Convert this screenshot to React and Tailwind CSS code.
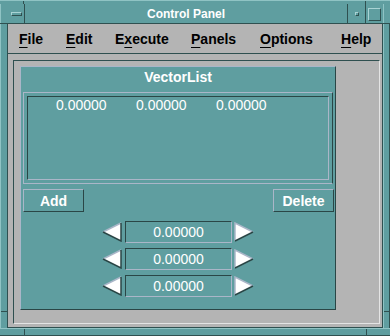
import React from "react";

const font = { fontFamily: '"Liberation Sans", Arial, sans-serif' };

function LeftArrow() {
  return (
    <svg width="20" height="20" viewBox="0 0 20 20" className="block">
      <polygon points="1,10 19,1 19,19" fill="#ffffff" />
      <polyline points="1,10 19,1" fill="none" stroke="#aab6c8" strokeWidth="1.5" />
      <polyline points="19,1 19,19 1,10" fill="none" stroke="#2a4646" strokeWidth="1.5" />
    </svg>
  );
}

function RightArrow() {
  return (
    <svg width="20" height="20" viewBox="0 0 20 20" className="block">
      <polygon points="1,1 19,10 1,19" fill="#ffffff" />
      <polyline points="1,19 1,1 19,10" fill="none" stroke="#aab6c8" strokeWidth="1.5" />
      <polyline points="19,10 1,19" fill="none" stroke="#2a4646" strokeWidth="1.5" />
    </svg>
  );
}

function MenuItem({ width, mnemonic, rest, before = "" }) {
  return (
    <div className={width}>
      {before}
      <span className="underline decoration-1 underline-offset-[3px]">{mnemonic}</span>
      {rest}
    </div>
  );
}

function Spinner() {
  return (
    <div className="flex h-[22px] items-center justify-center">
      <div className="mr-[3px]">
        <LeftArrow />
      </div>
      <div className="flex h-[22px] w-[107px] items-center justify-center border border-t-[#2a4646] border-l-[#2a4646] border-b-[#aab6c8] border-r-[#aab6c8] text-[14px] leading-[16px] text-white">
        0.00000
      </div>
      <div className="ml-[2px]">
        <RightArrow />
      </div>
    </div>
  );
}

export default function App() {
  return (
    <div className="flex h-[336px] w-[390px] flex-col bg-[#5f9ea0]" style={font}>
      {/* top frame strip */}
      <div className="flex h-[4px] border-t border-[#8fc3c4]">
        <div className="w-[24px] border-r border-[#2f5050]" />
        <div className="flex-1" />
        <div className="w-[25px] border-l border-[#2f5050]" />
      </div>

      {/* title bar */}
      <div className="flex h-[20px] border-b border-[#2f5050]">
        <div className="w-[8px] border-l border-[#8fc3c4]" />
        <div className="flex w-[17px] items-center justify-center border-r border-[#2f5050]">
          <div className="h-[4px] w-[11px] border border-t-[#a9d3d4] border-l-[#a9d3d4] border-b-[#2f5050] border-r-[#2f5050]" />
        </div>
        <div className="flex flex-1 items-center justify-center pt-[1px] text-[12px] font-bold leading-[14px] text-white">
          Control Panel
        </div>
        <div className="flex w-[18px] items-center justify-center border-l border-[#2f5050]">
          <div className="h-[4px] w-[4px] border border-t-[#a9d3d4] border-l-[#a9d3d4] border-b-[#2f5050] border-r-[#2f5050]" />
        </div>
        <div className="flex w-[18px] items-center justify-center border-l border-[#2f5050]">
          <div className="mt-[2px] h-[13px] w-[13px] border border-t-[#a9d3d4] border-l-[#a9d3d4] border-b-[#2f5050] border-r-[#2f5050]" />
        </div>
        <div className="w-[7px] border-l border-[#8fc3c4]" />
      </div>

      {/* middle */}
      <div className="flex flex-1">
        <div className="flex w-[8px] flex-col border-l border-[#8fc3c4]">
          <div className="flex-1 border-r border-[#2f5050]" />
          <div className="h-[17px] border-t border-r border-[#2f5050]" />
        </div>

        <div className="flex w-[375px] flex-col border-r border-[#2f5050] bg-[#b4b4b4]">
          {/* menu bar */}
          <div className="flex h-[30px] items-center border-b border-[#2f5050] pl-[11px] text-[14px] font-bold leading-[16px] text-black">
            <MenuItem width="w-[47px]" mnemonic="F" rest="ile" />
            <MenuItem width="w-[49px]" mnemonic="E" rest="dit" />
            <MenuItem width="w-[76px]" before="E" mnemonic="x" rest="ecute" />
            <MenuItem width="w-[69px]" mnemonic="P" rest="anels" />
            <MenuItem width="w-[81px]" mnemonic="O" rest="ptions" />
            <MenuItem width="w-[40px]" mnemonic="H" rest="elp" />
          </div>

          {/* work area */}
          <div className="flex-1 border-b border-[#2f5050] pl-[5px] pt-[6px] pr-[2px] pb-[3px]">
            <div className="h-full border border-t-[#2f5050] border-l-[#2f5050] border-b-[#e4e4e4] border-r-[#e4e4e4] pl-[6px] pt-[5px]">
              {/* teal panel */}
              <div className="flex h-[244px] w-[316px] flex-col border border-t-[#aab6c8] border-l-[#aab6c8] border-b-[#2a4646] border-r-[#2a4646] bg-[#5f9ea0] text-white">
                <div className="h-[25px] pt-[2px] text-center text-[14px] font-bold leading-[16px]">
                  VectorList
                </div>

                <div className="mx-[2px] h-[92px] border border-t-[#aab6c8] border-l-[#aab6c8] border-b-[#aab6c8] border-r-[#2a4646] p-[3px]">
                  <div className="h-full border border-t-[#2a4646] border-l-[#2a4646] border-b-[#aab6c8] border-r-[#aab6c8]">
                    <div className="flex pl-[28px] text-[14px] leading-[16px]">
                      <span className="w-[80px]">0.00000</span>
                      <span className="w-[80px]">0.00000</span>
                      <span className="w-[80px]">0.00000</span>
                    </div>
                  </div>
                </div>

                <div className="mt-[5px] flex justify-between pl-[2px] pr-[1px]">
                  <div className="flex h-[23px] w-[61px] items-center justify-center border border-t-[#aab6c8] border-l-[#aab6c8] border-b-[#2a4646] border-r-[#2a4646] text-[14px] font-bold leading-[16px]">
                    Add
                  </div>
                  <div className="flex h-[23px] w-[61px] items-center justify-center border border-t-[#aab6c8] border-l-[#aab6c8] border-b-[#2a4646] border-r-[#2a4646] text-[14px] font-bold leading-[16px]">
                    Delete
                  </div>
                </div>

                <div className="mt-[9px] flex flex-col gap-[5px]">
                  <Spinner />
                  <Spinner />
                  <Spinner />
                </div>
              </div>
            </div>
          </div>
        </div>

        <div className="flex w-[7px] flex-col border-l border-[#8fc3c4]">
          <div className="flex-1 border-r border-[#2f5050]" />
          <div className="h-[17px] border-t border-r border-[#2f5050]" />
        </div>
      </div>

      {/* bottom frame */}
      <div className="flex h-[8px] border-t border-b border-t-[#8fc3c4] border-b-[#2f5050]">
        <div className="w-[25px] border-r border-[#2f5050]" />
        <div className="flex-1" />
        <div className="w-[24px] border-l border-[#2f5050]" />
      </div>
    </div>
  );
}
